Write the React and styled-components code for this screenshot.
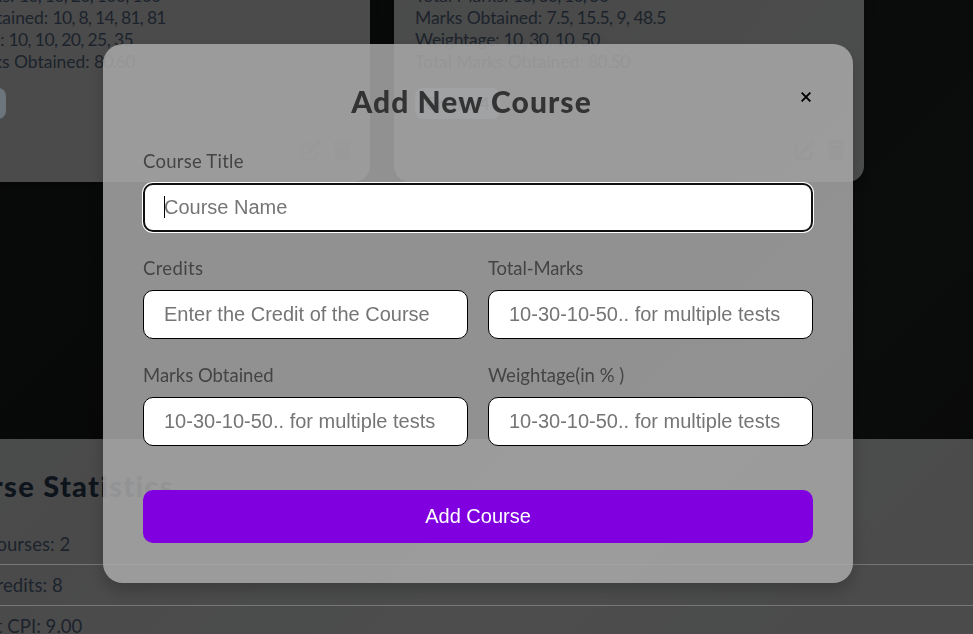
import React from "react";
import styled, { createGlobalStyle } from "styled-components";
import { FaPenToSquare, FaTrash } from "react-icons/fa6";

const GlobalStyle = createGlobalStyle`
  * { box-sizing: border-box; }
  body {
    margin: 0;
    overflow: hidden;
    background: #0c0c0c;
    font-family: "Gill Sans", "Gill Sans MT", Lato, "Open Sans", sans-serif;
  }
`;

const Screen = styled.div`
  height: 100vh;
  overflow: hidden;
  background: linear-gradient(135deg, #121212 0%, #101412 22%, #0e0e0e 38%, #141816 55%, #161a18 72%, #131315 90%, #131313 100%);
`;

const Page = styled.main`
  width: 1173px;
  margin-left: -100px;
`;

const CardRow = styled.section`
  display: flex;
  gap: 24px;
  margin-top: -15px;
  height: 197px;
`;

const Card = styled.article`
  width: 470px;
  display: flex;
  flex-direction: column;
  align-items: flex-start;
  padding: 0 18px 22px 21px;
  border-radius: 0 0 16px 16px;
  background: rgba(255, 255, 255, 0.56);
  box-shadow: 0 4px 10px rgba(0, 0, 0, 0.3);
`;

const CardLine = styled.p`
  margin: 0;
  font-size: 17.5px;
  line-height: 22px;
  white-space: pre;
  color: #3a4658;
  letter-spacing: ${(p) => p.$track}px;
`;

const Value = styled.span`
  letter-spacing: ${(p) => p.$track}px;
`;

const Badge = styled.span`
  width: 85px;
  height: 31px;
  margin-top: 15px;
  border-radius: 8px;
  background: #d8e8f8;
  color: #5f7f9f;
  font-size: 17px;
  line-height: 31px;
  text-align: center;
`;

const CardActions = styled.div`
  display: flex;
  gap: 11px;
  margin-top: auto;
  align-self: flex-end;
  font-size: 20px;
  line-height: 0;
  color: #7a7676;
`;

const Stats = styled.section`
  margin-top: 257px;
  height: 260px;
  padding: 29px 0 0 40px;
  background: rgba(255, 255, 255, 0.56);
`;

const StatsTitle = styled.h2`
  margin: 0 0 20px -4px;
  font-size: 29px;
  line-height: 36px;
  font-weight: 900;
  color: #1c2838;
  letter-spacing: 1.3px;
`;

const StatRow = styled.div`
  height: 41px;
  border-bottom: 1px solid #ececec;
  font-size: 18.5px;
  line-height: 41px;
  color: #3a4658;
  letter-spacing: 0.05px;
`;

const Overlay = styled.div`
  position: fixed;
  inset: 0;
  background: rgba(0, 0, 0, 0.5);
  display: flex;
  justify-content: flex-start;
  align-items: flex-start;
  padding: 44px 0 0 103px;
`;

const Modal = styled.form`
  width: 750px;
  height: 539px;
  padding: 40px;
  border-radius: 20px;
  background: rgba(169, 169, 169, 0.85);
  box-shadow: 0 8px 16px rgba(0, 0, 0, 0.2);
`;

const ModalHeader = styled.header`
  display: grid;
  grid-template-columns: 14px 1fr 14px;
  height: 65px;
`;

const ModalTitle = styled.h2`
  grid-column: 2;
  margin: -1px 0 0;
  padding-right: 13px;
  text-align: center;
  font-size: 30px;
  line-height: 36px;
  font-weight: 900;
  color: #333;
  letter-spacing: 1.05px;
`;

const CloseButton = styled.button`
  width: 14px;
  height: 26px;
  padding: 0;
  border: 0;
  background: none;
  color: #000;
  display: grid;
  place-items: center;
`;

const Fields = styled.div`
  display: grid;
  grid-template-columns: 1fr 1fr;
  gap: 24px 20px;
`;

const Field = styled.label`
  position: relative;
  grid-column: ${(p) => (p.$wide ? "1 / -1" : "auto")};
  display: flex;
  flex-direction: column;
  gap: 10px;
`;

const FieldLabel = styled.span`
  font-size: 18.5px;
  line-height: 24px;
  color: #444;
  white-space: pre;
  letter-spacing: ${(p) => p.$track}px;
`;

const Input = styled.input`
  width: 100%;
  height: 49px;
  padding: 0 ${(p) => (p.$active ? 19 : 20)}px;
  border: ${(p) => (p.$active ? "2px solid #101010" : "1px solid #000")};
  box-shadow: ${(p) => (p.$active ? "0 0 0 1px #fff" : "none")};
  border-radius: 10px;
  outline: none;
  background: #fff;
  font: 20px "Liberation Sans", Arial, sans-serif;
  &::placeholder { color: #757575; }
`;

const Caret = styled.i`
  position: absolute;
  left: 21px;
  bottom: 14px;
  width: 1px;
  height: 22px;
  background: #000;
`;

const Submit = styled.button`
  display: block;
  width: 100%;
  height: 53px;
  margin-top: 44px;
  border: 0;
  border-radius: 10px;
  background: #8000e0;
  color: #fff;
  font: 20px "Liberation Sans", Arial, sans-serif;
`;

const courses = [
  {
    lines: [
      ["Total Marks: ", "10, 10, 20, 100, 100", 0, -0.7],
      ["Marks Obtained: ", "10, 8, 14, 81, 81", -0.05, -0.7],
      ["Weightage: ", "10, 10, 20, 25, 35", -0.35, -0.6],
      ["Total Marks Obtained: ", "80.60", -0.04, -0.8],
    ],
    credits: 4,
  },
  {
    lines: [
      ["Total Marks: ", "10, 30, 10, 50", 0, -0.8],
      ["Marks Obtained: ", "7.5, 15.5, 9, 48.5", -0.05, -0.55],
      ["Weightage: ", "10, 30, 10, 50", -0.25, -0.75],
      ["Total Marks Obtained: ", "80.50", -0.04, -0.6],
    ],
    credits: 4,
  },
];

const stats = ["Total Courses: 2", "Total Credits: 8", "Current CPI: 9.00"];

const hint = "10-30-10-50.. for multiple tests";
const fields = [
  { label: "Course Title", hint: "Course Name", active: true, track: 0.25 },
  { label: "Credits", hint: "Enter the Credit of the Course", type: "number", track: 0.35 },
  { label: "Total-Marks", hint, track: -0.1 },
  { label: "Marks Obtained", hint, track: 0 },
  { label: "Weightage(in % )", hint, track: 0 },
];

export default function App() {
  return (
    <Screen>
      <GlobalStyle />
      <Page>
        <CardRow>
          {courses.map((course, i) => (
            <Card key={i}>
              {course.lines.map(([name, value, nameTrack, valueTrack]) => (
                <CardLine key={name} $track={nameTrack}>
                  {name}
                  <Value $track={valueTrack}>{value}</Value>
                </CardLine>
              ))}
              <Badge>Credit: {course.credits}</Badge>
              <CardActions>
                <FaPenToSquare />
                <FaTrash />
              </CardActions>
            </Card>
          ))}
        </CardRow>
        <Stats>
          <StatsTitle>Course Statistics</StatsTitle>
          {stats.map((text) => (
            <StatRow key={text}>{text}</StatRow>
          ))}
        </Stats>
      </Page>
      <Overlay>
        <Modal>
          <ModalHeader>
            <ModalTitle>Add New Course</ModalTitle>
            <CloseButton type="button" aria-label="Close">
              <svg width="10" height="10" viewBox="0 0 10 10" stroke="currentColor" strokeWidth="1.9">
                <path d="M.6.6 9.4 9.4M9.4.6.6 9.4" />
              </svg>
            </CloseButton>
          </ModalHeader>
          <Fields>
            {fields.map((f) => (
              <Field key={f.label} $wide={f.active}>
                <FieldLabel $track={f.track}>{f.label}</FieldLabel>
                <Input type={f.type || "text"} placeholder={f.hint} $active={f.active} />
                {f.active && <Caret />}
              </Field>
            ))}
          </Fields>
          <Submit type="button">Add Course</Submit>
        </Modal>
      </Overlay>
    </Screen>
  );
}
